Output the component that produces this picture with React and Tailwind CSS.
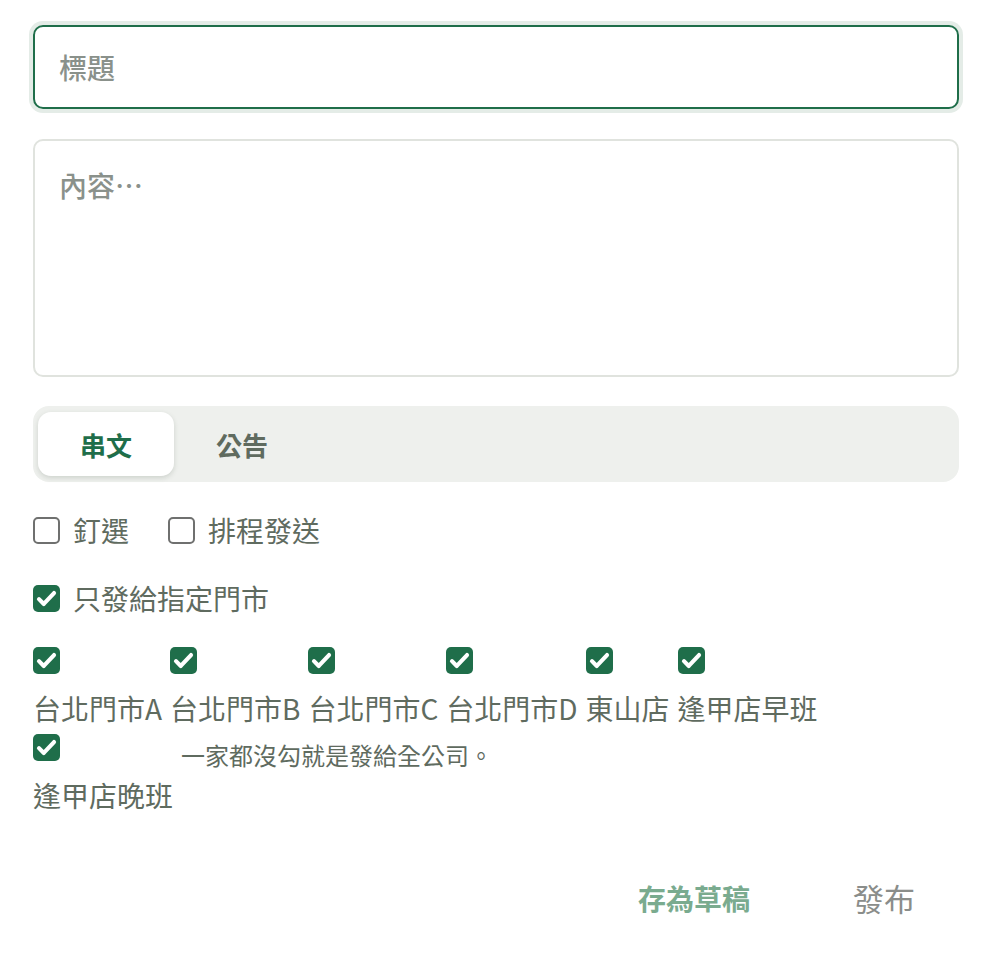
import React, { useState } from 'react';

const FONT = { fontFamily: '"Noto Sans CJK TC", "Noto Sans", sans-serif' };

const STORES = ['台北門市A', '台北門市B', '台北門市C', '台北門市D', '東山店', '逢甲店早班', '逢甲店晚班'];

function Box({ checked, onChange }) {
  return (
    <button
      type="button"
      onClick={onChange}
      className={`flex h-[27px] w-[27px] shrink-0 items-center justify-center rounded-[5px] ${
        checked ? 'bg-[#1f6e4a]' : 'border-2 border-[#6f706f] bg-white'
      }`}
    >
      {checked && (
        <svg viewBox="0 0 24 24" className="h-[25px] w-[25px]" fill="none">
          <path d="M4.8 12.6l4.6 4.6L19.2 6.8" stroke="white" strokeWidth="4" strokeLinecap="round" strokeLinejoin="round" />
        </svg>
      )}
    </button>
  );
}

export default function App() {
  const [tab, setTab] = useState('post');
  const [pin, setPin] = useState(false);
  const [schedule, setSchedule] = useState(false);
  const [onlyStores, setOnlyStores] = useState(true);
  const [picked, setPicked] = useState(STORES);

  const toggleStore = (s) =>
    setPicked((p) => (p.includes(s) ? p.filter((x) => x !== s) : [...p, s]));

  return (
    <div className="min-h-[958px] bg-white px-[33px] pt-[25px] text-[#5f6b5f]" style={FONT}>
      <input
        placeholder="標題"
        className="block h-[84px] w-full rounded-[10px] border-2 border-[#1f6e4a] px-[24px] text-[28px] font-medium text-[#333] shadow-[0_0_0_4px_#e4ece7] outline-none placeholder:text-[#8a918b]"
      />

      <textarea
        placeholder="內容…"
        className="mt-[30px] block h-[238px] w-full resize-none rounded-[10px] border-2 border-[#e0e3de] px-[24px] pt-[24px] text-[28px] font-medium leading-[40px] text-[#333] outline-none placeholder:text-[#8a918b]"
      />

      <div className="mt-[29px] flex h-[76px] rounded-[16px] bg-[#eef0ed] p-[6px] pl-[5px]">
        {[
          ['post', '串文'],
          ['notice', '公告'],
        ].map(([key, label]) => (
          <button
            key={key}
            type="button"
            onClick={() => setTab(key)}
            className={`flex w-[136px] items-center justify-center rounded-[13px] text-[26px] font-bold ${
              tab === key ? 'bg-white text-[#1f6e4a] shadow-[0_2px_5px_rgba(60,80,60,0.18)]' : 'text-[#5f6b5f]'
            }`}
          >
            {label}
          </button>
        ))}
      </div>

      <div className="mt-[28px] flex h-[40px] items-center gap-[39px] text-[28px]">
        <label className="flex items-center gap-[13px]">
          <Box checked={pin} onChange={() => setPin(!pin)} />
          釘選
        </label>
        <label className="flex items-center gap-[13px]">
          <Box checked={schedule} onChange={() => setSchedule(!schedule)} />
          排程發送
        </label>
      </div>

      <label className="mt-[28px] flex h-[40px] items-center gap-[13px] text-[28px]">
        <Box checked={onlyStores} onChange={() => setOnlyStores(!onlyStores)} />
        只發給指定門市
      </label>

      <div className="mt-[29px] flex flex-wrap items-start gap-x-[8px] gap-y-[6px] text-[28px] leading-[40px]">
        {STORES.map((s) => (
          <label key={s} className="flex flex-col items-start">
            <Box checked={picked.includes(s)} onChange={() => toggleStore(s)} />
            <span className="mt-[14px]">{s}</span>
          </label>
        ))}
        <p className="mt-[5px] text-[24px] leading-[32px] text-[#5f6b5f]">一家都沒勾就是發給全公司。</p>
      </div>

      <div className="mt-[60px] flex items-center justify-end">
        <button type="button" className="px-[20px] text-[28px] font-bold text-[#7aab8f]">
          存為草稿
        </button>
        <button type="button" className="ml-[39px] px-[44px] text-[31px] text-[#8a8d8a]">
          發布
        </button>
      </div>
    </div>
  );
}
